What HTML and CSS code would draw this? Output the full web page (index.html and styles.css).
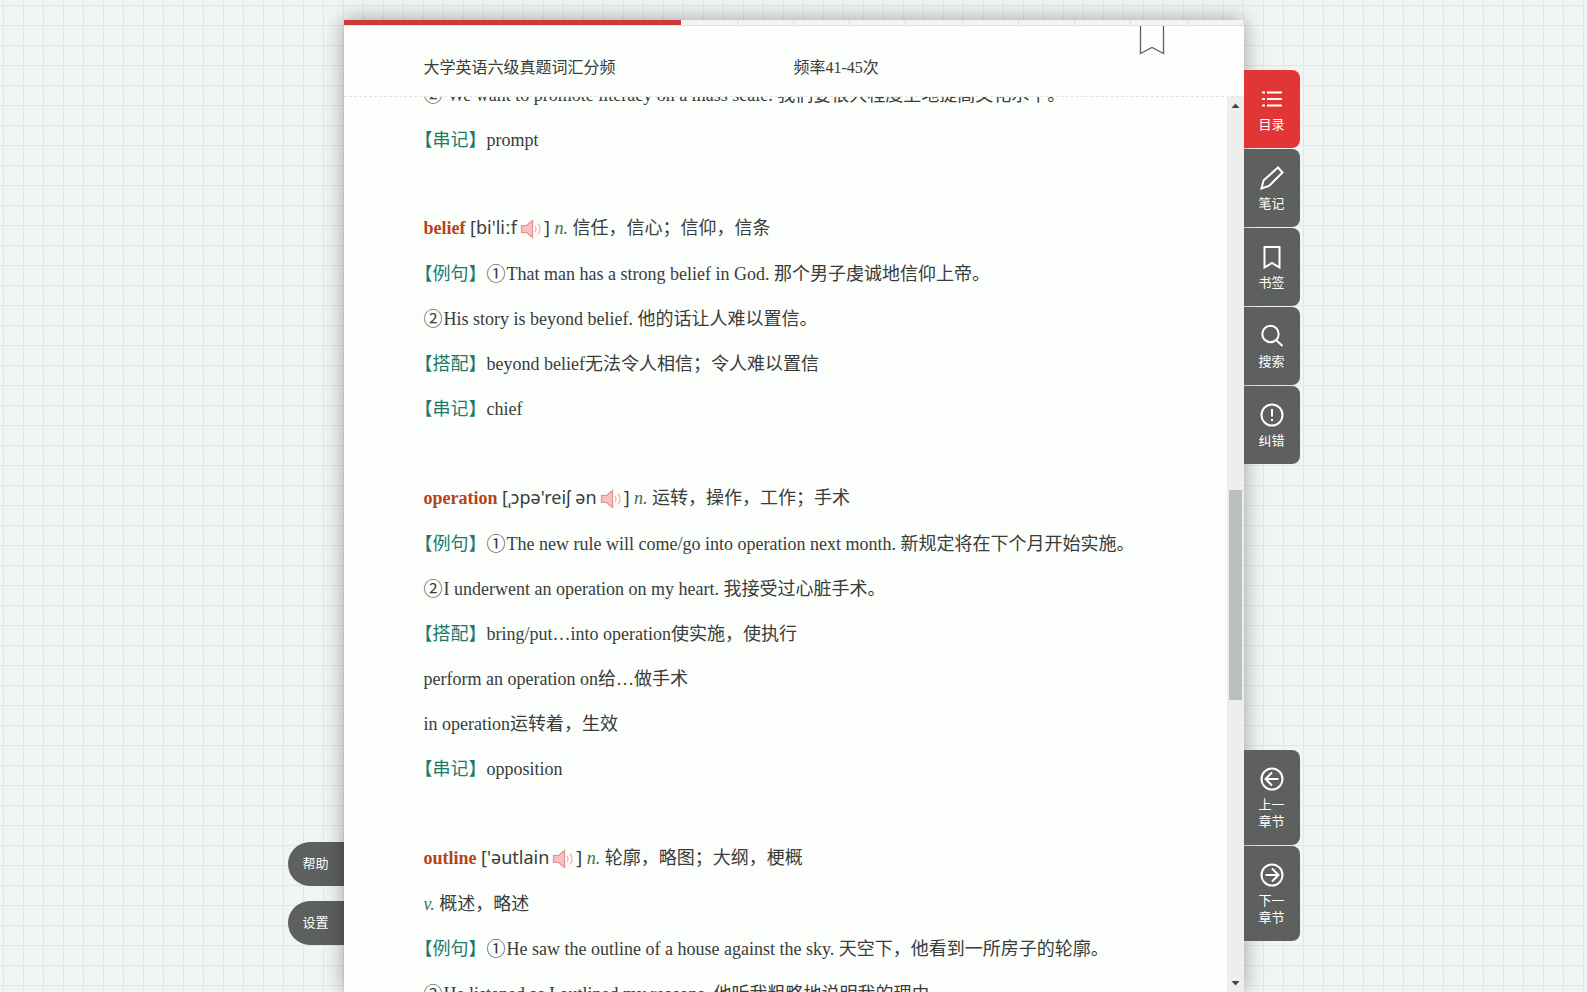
FILE: index.html
```html
<!DOCTYPE html>
<html lang="zh-CN">
<head>
<meta charset="utf-8">
<meta name="viewport" content="width=device-width, initial-scale=1">
<title>大学英语六级真题词汇分频</title>
<link rel="stylesheet" href="styles.css">
</head>
<body>
<svg class="defs" aria-hidden="true">
  <symbol id="sound" viewBox="0 0 22 20">
    <path d="M1.500 6.500h5l6-5v17l-6-5h-5z" fill="#f6c0c0" stroke="#e58f92" stroke-width="1.200"/>
    <path d="M15 7q2 3 0 6M18 4.500q4 5.500 0 11" fill="none" stroke="#eeb4b4" stroke-width="1.300"/>
  </symbol>
</svg>
<div class="reader">
  <div class="side side-left">
    <button type="button" class="pill">帮助</button>
    <button type="button" class="pill">设置</button>
  </div>

  <main class="page">
    <div class="progress"><div class="progress-bar" style="width:37.5%"></div></div>
    <header class="page-head">
      <span>大学英语六级真题词汇分频</span>
      <span>频率41-45次</span>
      <button type="button" class="ribbon" aria-label="添加书签">
        <svg width="26" height="29" viewBox="0 0 26 29"><path d="M1.500 0v27.500l11.500-6 11.500 6V0" fill="none" stroke="#5c605d" stroke-width="1.300"/></svg>
      </button>
    </header>
    <div class="view">
      <article class="text">
        <p><span class="num">②</span> We want to promote literacy on a mass scale. 我们要很大程度上地提高文化水平。</p>
        <p><span class="tag">【串记】</span>prompt</p>

        <section class="entry">
          <p class="word"><b>belief</b> <span class="ipa">[bi'liːf<svg class="sound"><use href="#sound"/></svg>]</span> <i>n.</i> 信任，信心；信仰，信条</p>
          <p><span class="tag">【例句】</span><span class="num">①</span>That man has a strong belief in God. 那个男子虔诚地信仰上帝。</p>
          <p><span class="num">②</span>His story is beyond belief. 他的话让人难以置信。</p>
          <p><span class="tag">【搭配】</span>beyond belief无法令人相信；令人难以置信</p>
          <p><span class="tag">【串记】</span>chief</p>
        </section>

        <section class="entry">
          <p class="word"><b>operation</b> <span class="ipa">[ˌɔpə'reiʃ ən<svg class="sound"><use href="#sound"/></svg>]</span> <i>n.</i> 运转，操作，工作；手术</p>
          <p><span class="tag">【例句】</span><span class="num">①</span>The new rule will come/go into operation next month. 新规定将在下个月开始实施。</p>
          <p><span class="num">②</span>I underwent an operation on my heart. 我接受过心脏手术。</p>
          <p><span class="tag">【搭配】</span>bring/put…into operation使实施，使执行</p>
          <p>perform an operation on给…做手术</p>
          <p>in operation运转着，生效</p>
          <p><span class="tag">【串记】</span>opposition</p>
        </section>

        <section class="entry">
          <p class="word"><b>outline</b> <span class="ipa">['əutlain<svg class="sound"><use href="#sound"/></svg>]</span> <i>n.</i> 轮廓，略图；大纲，梗概</p>
          <p><i>v.</i> 概述，略述</p>
          <p><span class="tag">【例句】</span><span class="num">①</span>He saw the outline of a house against the sky. 天空下，他看到一所房子的轮廓。</p>
          <p><span class="num">②</span>He listened as I outlined my reasons. 他听我粗略地说明我的理由。</p>
        </section>
      </article>
      <div class="scroll">
        <svg width="9" height="5" viewBox="0 0 9 5"><path d="M0.500 5l4-4.500 4 4.500z" fill="#444"/></svg>
        <div class="track"><div class="thumb"></div></div>
        <svg width="9" height="5" viewBox="0 0 9 5"><path d="M0.500 0l4 4.500 4-4.500z" fill="#444"/></svg>
      </div>
    </div>
  </main>

  <div class="side side-right">
    <nav class="tools">
      <button type="button" class="tool active">
        <svg class="icon" viewBox="0 0 24 24"><path d="M7 5.500h15M7 12h15M7 18.500h15M2 5.500h3M2 12h3M2 18.500h3"/></svg>目录</button>
      <button type="button" class="tool">
        <svg class="icon" viewBox="0 0 24 24"><path d="M1.500 22.500l2-8L18 1.500l4.500 5L9 20z"/></svg>笔记</button>
      <button type="button" class="tool">
        <svg class="icon" viewBox="0 0 24 24"><path d="M4.500 2h15v20.500L12 18l-7.500 4.500z"/></svg>书签</button>
      <button type="button" class="tool">
        <svg class="icon" viewBox="0 0 24 24"><circle cx="10.500" cy="10" r="8.200"/><path d="M16 16l6.500 6"/></svg>搜索</button>
      <button type="button" class="tool">
        <svg class="icon" viewBox="0 0 24 24"><circle cx="12" cy="12" r="10.500"/><path d="M12 6v7.500M12 16v2"/></svg>纠错</button>
    </nav>
    <nav class="tools">
      <button type="button" class="tool chapter">
        <svg class="icon" viewBox="0 0 24 24"><circle cx="12" cy="12" r="10.500"/><path d="M18.500 12H6M12 5.500L5.500 12l6.500 6.500"/></svg>上一<br>章节</button>
      <button type="button" class="tool chapter">
        <svg class="icon" viewBox="0 0 24 24"><circle cx="12" cy="12" r="10.500"/><path d="M5.500 12H18M12 5.500l6.500 6.500-6.500 6.500"/></svg>下一<br>章节</button>
    </nav>
  </div>
</div>
</body>
</html>
```
FILE: styles.css
```css
* { box-sizing: border-box; }

body {
  margin: 0;
  color: #383c3a;
  font-family: "Liberation Serif", "Noto Sans CJK SC", serif;
  background-color: #f1f5f3;
  background-image:
    linear-gradient(to right, #e1e7e4 1px, transparent 1px),
    linear-gradient(to bottom, #e1e7e4 1px, transparent 1px),
    repeating-linear-gradient(45deg, transparent 0 6px, #edf1ef 6px 7px);
  background-size: 20px 20px, 20px 20px, 20px 20px;
  background-position: 3px 5px;
}

.defs { display: none; }

.reader {
  display: flex;
  justify-content: center;
  height: 100vh;
  overflow: hidden;
}

.side {
  flex: none;
  width: 56px;
  display: flex;
  flex-direction: column;
}

.side-left {
  justify-content: flex-end;
  gap: 15px;
  padding-bottom: 47px;
}

.side-right {
  justify-content: space-between;
  padding: 70px 0 51px;
}

.side button {
  border: 0;
  color: #fff;
  background: #5d605e;
  font: 13px/17px "Noto Sans CJK SC", sans-serif;
  cursor: pointer;
}

.side .pill {
  height: 44px;
  padding: 0 0 4px;
  border-radius: 22px 0 0 22px;
}

.tools {
  display: flex;
  flex-direction: column;
  gap: 1px;
}

.side .tool {
  display: block;
  width: 100%;
  height: 78px;
  padding: 0;
  border-radius: 0 8px 8px 0;
  text-align: center;
}

.side .active { background: #e23535; }
.side .chapter { height: 95px; }

.icon {
  display: block;
  width: 24px;
  height: 24px;
  margin: 0 auto 4px;
  fill: none;
  stroke: #fff;
  stroke-width: 2;
}

.page {
  flex: 0 1 900px;
  min-width: 0;
  margin-top: 20px;
  display: flex;
  flex-direction: column;
  background: #fcfefc;
  box-shadow: 0 0 20px rgba(0, 0, 0, 0.35);
}

.progress {
  flex: none;
  height: 6px;
  border-bottom: 1px solid #dfe3e1;
  background: repeating-linear-gradient(to right, #f2f4f3 0 calc(6.25% - 1px), #dcdfdd calc(6.25% - 1px) 6.25%);
}

.progress-bar {
  height: 5px;
  background: #cb3d3d;
}

.page-head {
  position: relative;
  flex: none;
  display: grid;
  grid-template-columns: 1fr 1fr;
  align-items: center;
  height: 71px;
  padding: 10px 80px 0;
  border-bottom: 1px dashed #dfe3e0;
  font-size: 16px;
}

.ribbon {
  position: absolute;
  top: 0;
  right: 79px;
  padding: 0;
  border: 0;
  background: none;
  cursor: pointer;
}

.ribbon svg { display: block; }

.view {
  flex: 1;
  min-height: 0;
  display: flex;
  overflow: hidden;
}

.text {
  flex: 1;
  min-width: 0;
  margin-top: -24px;
  padding: 0 80px;
  font-size: 18px;
  line-height: 45px;
  white-space: nowrap;
}

.text p {
  height: 45px;
  margin: 0;
}

.entry { padding-top: 43px; }
.text .word { height: 46px; }
.entry + .entry { padding-top: 44px; }

.text b { color: #b5431a; }
.text i { color: #3f6f5b; }

.tag {
  margin-left: -9px;
  color: #1d7a6a;
  text-spacing-trim: space-all;
}

.num {
  margin-right: 1px;
  font-family: "Noto Sans CJK SC", sans-serif;
  font-size: 19px;
  line-height: 1;
  vertical-align: -1px;
}

.ipa {
  font-family: "Noto Sans", sans-serif;
  line-height: 1;
}

.sound {
  width: 22px;
  height: 20px;
  margin: 0 2px 0 3px;
  vertical-align: -5px;
}

.scroll {
  flex: none;
  width: 17px;
  display: flex;
  flex-direction: column;
  align-items: center;
  padding: 6px 0;
  background: #edefed;
}

.track {
  flex: 1;
  align-self: stretch;
  padding: 0 2px;
}

.thumb {
  height: 24%;
  margin-top: 382px;
  background: #bbbfbc;
}
```
